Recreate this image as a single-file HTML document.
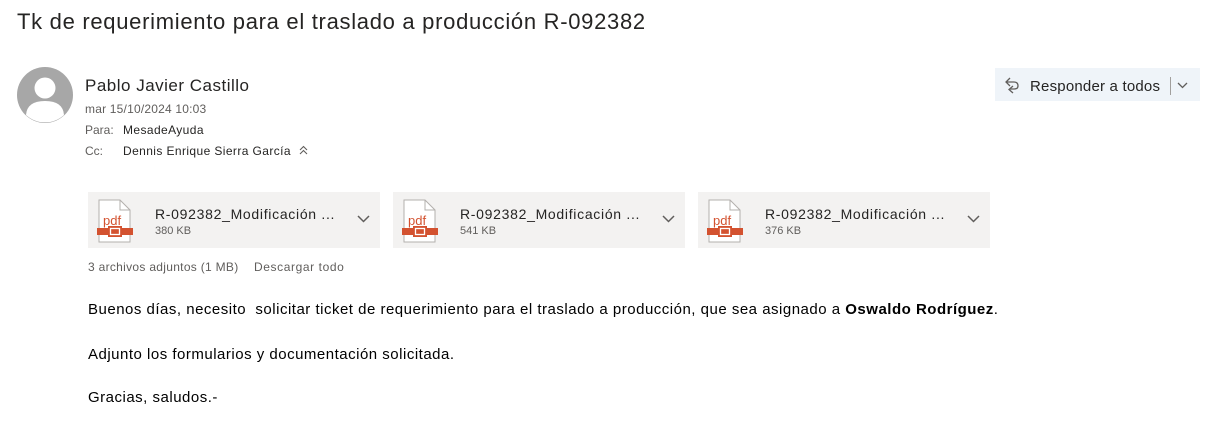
<!DOCTYPE html>
<html><head><meta charset="utf-8"><style>
body{margin:0;width:1222px;height:429px;background:#fff;font-family:"Segoe UI","Liberation Sans",sans-serif;color:#252423;position:relative;overflow:hidden}
.a{position:absolute;white-space:nowrap}
.card{position:absolute;top:192px;width:292px;height:56px;background:#f3f2f1}
.card .n{position:absolute;left:67px;top:14px;font-size:14px;color:#252423;letter-spacing:0.7px}
.card .s{position:absolute;left:67px;top:33px;font-size:11px;color:#605e5c}
.card svg.i{position:absolute;left:8px;top:7px}
.card svg.c{position:absolute;left:269px;top:23px}
</style></head><body>
<div class="a" style="left:17px;top:9px;font-size:22px;letter-spacing:0.7px;color:#252423">Tk de requerimiento para el traslado a producción R-092382</div>
<svg class="a" style="left:17px;top:67px" width="56" height="56" viewBox="0 0 56 56"><circle cx="28" cy="28" r="28" fill="#a7a7a7"/><circle cx="28" cy="21" r="10.5" fill="#fff"/><path d="M9 48 Q10 34 28 34 Q46 34 47 48 A28 28 0 0 1 9 48Z" fill="#fff"/></svg>
<div class="a" style="left:85px;top:76px;font-size:17px;letter-spacing:0.5px">Pablo Javier Castillo</div>
<div class="a" style="left:85px;top:102px;font-size:12px;letter-spacing:0.2px;color:#605e5c">mar 15/10/2024 10:03</div>
<div class="a" style="left:85px;top:123px;font-size:12px;color:#605e5c">Para:</div>
<div class="a" style="left:123px;top:123px;font-size:12px;letter-spacing:0.4px;color:#252423">MesadeAyuda</div>
<div class="a" style="left:85px;top:144px;font-size:12px;color:#605e5c">Cc:</div>
<div class="a" style="left:123px;top:144px;font-size:12px;letter-spacing:0.4px;color:#252423">Dennis Enrique Sierra García</div>
<svg class="a" style="left:299px;top:145px" width="9" height="10" viewBox="0 0 9 10"><path d="M1 5 L4.5 1.5 L8 5 M1 9 L4.5 5.5 L8 9" stroke="#605e5c" fill="none" stroke-width="1.1"/></svg>
<div class="a" style="left:995px;top:68px;width:205px;height:33px;background:#eff4f9"></div>
<svg class="a" style="left:1004px;top:77px" width="16" height="17" viewBox="0 0 16 17"><path d="M6 1 L2 5 L6 9 M2 5 H10 Q14 5 14 9 Q14 12 10 12 H6 M9 9 L5 12.5 L9 16" stroke="#605e5c" fill="none" stroke-width="1.3"/></svg>
<div class="a" style="left:1030px;top:78px;font-size:15px;letter-spacing:0.2px;color:#252423">Responder a todos</div>
<div class="a" style="left:1170px;top:77px;width:1px;height:18px;background:#a19f9d"></div>
<svg class="a" style="left:1177px;top:82px" width="11" height="7" viewBox="0 0 11 7"><path d="M1 1 L5.5 5.5 L10 1" stroke="#605e5c" fill="none" stroke-width="1.3"/></svg>

<div class="card" style="left:88px"><svg class="i" width="38" height="44" viewBox="0 0 38 44"><path d="M3 1 H24 L34 11 V43 H3Z" fill="#fff" stroke="#b3b0ad"/><path d="M24 1 V11 H34" fill="none" stroke="#b3b0ad"/><text x="7" y="26" font-family="Liberation Sans,sans-serif" font-size="13" fill="#d35230">pdf</text><rect x="1" y="29" width="36" height="7" fill="#d35230"/><rect x="12" y="27" width="14" height="11" fill="#d35230"/><rect x="14.5" y="29.5" width="9" height="6" fill="none" stroke="#fff" stroke-width="1.3"/></svg><div class="n">R-092382_Modificación ...</div><div class="s">380 KB</div><svg class="c" width="13" height="8" viewBox="0 0 13 8"><path d="M1 1 L6.5 6.5 L12 1" stroke="#605e5c" fill="none" stroke-width="1.5"/></svg></div>
<div class="card" style="left:393px"><svg class="i" width="38" height="44" viewBox="0 0 38 44"><path d="M3 1 H24 L34 11 V43 H3Z" fill="#fff" stroke="#b3b0ad"/><path d="M24 1 V11 H34" fill="none" stroke="#b3b0ad"/><text x="7" y="26" font-family="Liberation Sans,sans-serif" font-size="13" fill="#d35230">pdf</text><rect x="1" y="29" width="36" height="7" fill="#d35230"/><rect x="12" y="27" width="14" height="11" fill="#d35230"/><rect x="14.5" y="29.5" width="9" height="6" fill="none" stroke="#fff" stroke-width="1.3"/></svg><div class="n">R-092382_Modificación ...</div><div class="s">541 KB</div><svg class="c" width="13" height="8" viewBox="0 0 13 8"><path d="M1 1 L6.5 6.5 L12 1" stroke="#605e5c" fill="none" stroke-width="1.5"/></svg></div>
<div class="card" style="left:698px"><svg class="i" width="38" height="44" viewBox="0 0 38 44"><path d="M3 1 H24 L34 11 V43 H3Z" fill="#fff" stroke="#b3b0ad"/><path d="M24 1 V11 H34" fill="none" stroke="#b3b0ad"/><text x="7" y="26" font-family="Liberation Sans,sans-serif" font-size="13" fill="#d35230">pdf</text><rect x="1" y="29" width="36" height="7" fill="#d35230"/><rect x="12" y="27" width="14" height="11" fill="#d35230"/><rect x="14.5" y="29.5" width="9" height="6" fill="none" stroke="#fff" stroke-width="1.3"/></svg><div class="n">R-092382_Modificación ...</div><div class="s">376 KB</div><svg class="c" width="13" height="8" viewBox="0 0 13 8"><path d="M1 1 L6.5 6.5 L12 1" stroke="#605e5c" fill="none" stroke-width="1.5"/></svg></div>

<div class="a" style="left:88px;top:260px;font-size:12px;letter-spacing:0.3px;color:#605e5c">3 archivos adjuntos (1 MB)</div>
<div class="a" style="left:254px;top:260px;font-size:12px;letter-spacing:0.6px;color:#605e5c">Descargar todo</div>
<div class="a" style="left:88px;top:301px;font-size:15px;letter-spacing:0.5px;color:#000">Buenos días, necesito&nbsp; solicitar ticket de requerimiento para el traslado a producción, que sea asignado a <b>Oswaldo Rodríguez</b>.</div>
<div class="a" style="left:88px;top:346px;font-size:15px;letter-spacing:0.5px;color:#000">Adjunto los formularios y documentación solicitada.</div>
<div class="a" style="left:88px;top:389px;font-size:15px;letter-spacing:0.5px;color:#000">Gracias, saludos.-</div>
</body></html>
